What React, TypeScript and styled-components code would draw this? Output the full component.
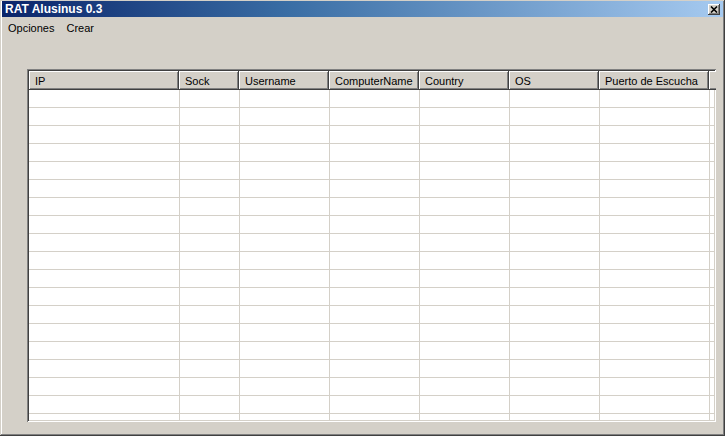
import React from 'react';
import styled, { createGlobalStyle } from 'styled-components';

const GlobalStyle = createGlobalStyle`
  html, body {
    margin: 0;
    padding: 0;
    background: #d4d0c8;
  }
  * {
    box-sizing: border-box;
  }
`;

// window frame
const Window = styled.div`
  width: 725px;
  height: 436px;
  display: flex;
  flex-direction: column;
  padding: 1px 2px 2px 2px;
  background: #d4d0c8;
  font-family: 'Liberation Sans', Arial, sans-serif;
  font-size: 11px;
  color: #000;
  box-shadow: inset -1px -1px #404040, inset 1px 1px #d4d0c8,
    inset -2px -2px #808080, inset 2px 2px #ffffff;
  overflow: hidden;
`;

const TitleBar = styled.div`
  height: 16px;
  flex: none;
  display: flex;
  align-items: center;
  justify-content: space-between;
  padding: 0 3px 0 3px;
  background: linear-gradient(to right, #0a246a 0%, #3a6ea5 40%, #a6caf0 100%);
`;

const Title = styled.span`
  color: #fff;
  font-weight: bold;
  font-size: 12px;
  line-height: 17px;
`;

const CloseButton = styled.div`
  width: 12px;
  height: 11px;
  display: flex;
  align-items: center;
  justify-content: center;
  background: #d4d0c8;
  box-shadow: inset -1px -1px #404040, inset 1px 1px #ffffff,
    inset -2px -2px #808080;
`;

const MenuBar = styled.div`
  height: 21px;
  flex: none;
  display: flex;
  align-items: center;
  padding: 1px 0 0 0;
`;

const MenuItem = styled.span`
  padding: 0 6px;
  line-height: 20px;
`;

const Content = styled.div`
  flex: 1;
  display: flex;
  padding: 31px 7px 12px 25px;
  min-height: 0;
`;

// sunken list view
const ListView = styled.div`
  flex: 1;
  display: flex;
  flex-direction: column;
  padding: 2px;
  background: #fff;
  overflow: hidden;
  box-shadow: inset 1px 1px #808080, inset -1px -1px #ffffff,
    inset 2px 2px #404040, inset -2px -2px #d4d0c8;
`;

const columns = '150px 60px 90px 90px 90px 90px 110px 1fr';

const HeaderRow = styled.div`
  display: grid;
  grid-template-columns: ${columns};
  height: 19px;
  flex: none;
`;

const HeaderCell = styled.div`
  background: #d4d0c8;
  padding: 1px 6px 0;
  line-height: 18px;
  white-space: nowrap;
  overflow: hidden;
  box-shadow: inset -1px -1px #404040, inset 1px 1px #ffffff,
    inset -2px -2px #808080;
`;

const Body = styled.div`
  flex: 1;
  overflow: hidden;
`;

const Row = styled.div`
  display: grid;
  grid-template-columns: ${columns};
  height: 18px;
  border-bottom: 1px solid #d4d0c8;
`;

const Cell = styled.div<{ $first?: boolean }>`
  border-left: ${p => (p.$first ? 'none' : '1px solid #d4d0c8')};
`;

const headers = [
  'IP',
  'Sock',
  'Username',
  'ComputerName',
  'Country',
  'OS',
  'Puerto de Escucha',
  '',
];

export default function App() {
  const rows = Array.from({ length: 19 }, (_, i) => i);

  return (
    <>
      <GlobalStyle />
      <Window>
        <TitleBar>
          <Title>RAT Alusinus 0.3</Title>
          <CloseButton>
            <svg width="8" height="7" viewBox="0 0 8 7">
              <path d="M1 0.5 L7 6.5 M7 0.5 L1 6.5" stroke="#000" strokeWidth="1.6" />
            </svg>
          </CloseButton>
        </TitleBar>

        <MenuBar>
          <MenuItem>Opciones</MenuItem>
          <MenuItem>Crear</MenuItem>
        </MenuBar>

        <Content>
          <ListView>
            <HeaderRow>
              {headers.map((h, i) => (
                <HeaderCell key={i}>{h}</HeaderCell>
              ))}
            </HeaderRow>
            <Body>
              {rows.map(r => (
                <Row key={r}>
                  {headers.map((_, i) => (
                    <Cell key={i} $first={i === 0} />
                  ))}
                </Row>
              ))}
            </Body>
          </ListView>
        </Content>
      </Window>
    </>
  );
}
